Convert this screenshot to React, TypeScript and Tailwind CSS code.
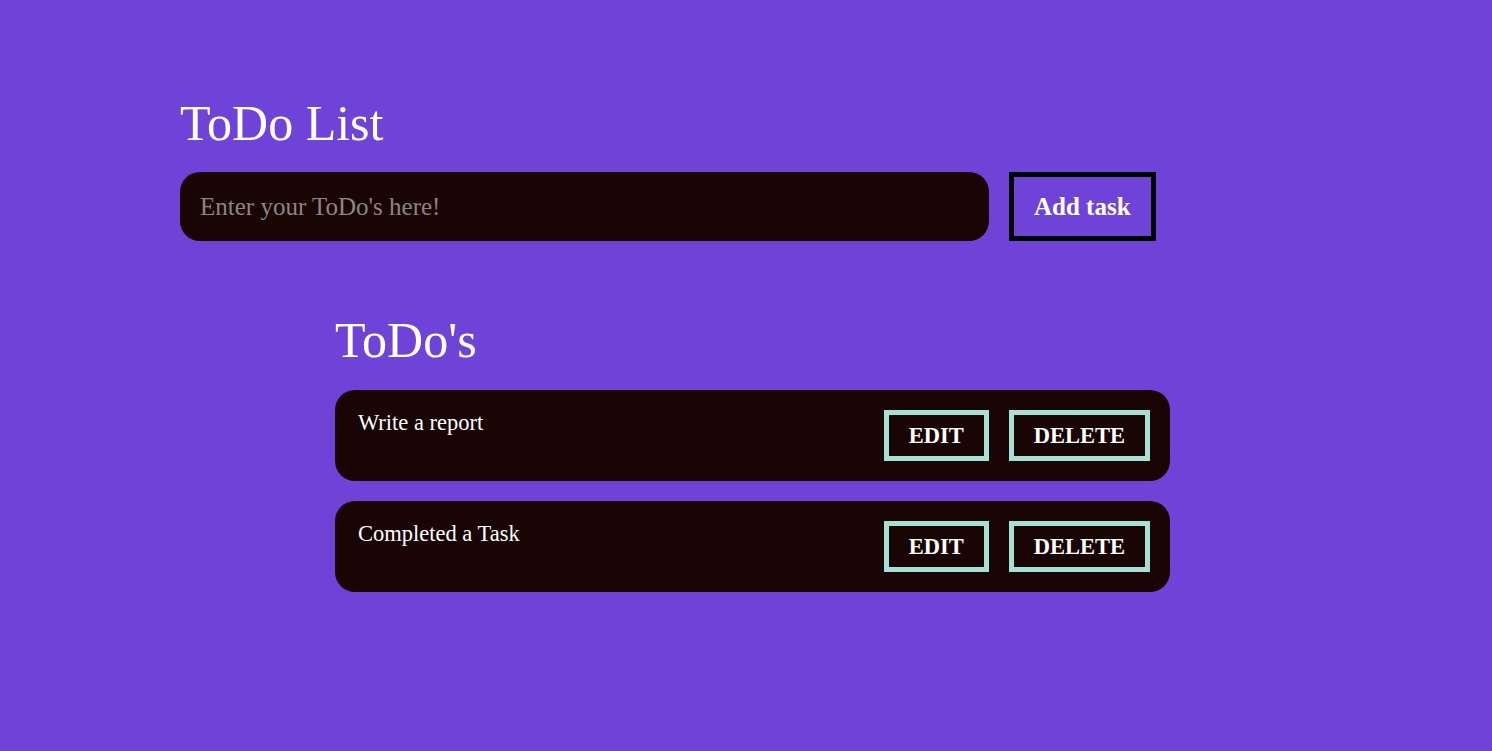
const todos = ["Write a report", "Completed a Task"];

const serif = { fontFamily: '"Liberation Serif", "Times New Roman", serif' };

export default function App() {
  return (
    <div className="min-h-screen w-full bg-[#7043d8] text-white" style={serif}>
      <div className="pl-[180px] pt-[97px]">
        <h1 className="text-[50px] leading-[53px] font-normal">ToDo List</h1>
        <div className="mt-[22px] flex gap-5">
          <input
            type="text"
            placeholder="Enter your ToDo's here!"
            className="h-[69px] w-[809px] rounded-[20px] bg-[#1a0505] px-5 text-[25px] text-white outline-none placeholder:text-[#8c8484]"
            style={serif}
          />
          <button
            className="h-[69px] border-[5px] border-black px-5 text-[25px] font-bold text-white"
            style={serif}
          >
            Add task
          </button>
        </div>

        <div className="ml-[155px] mt-[73px] w-[835px]">
          <h2 className="text-[50px] leading-[53px] font-normal">ToDo's</h2>
          <div className="mt-[23px] flex flex-col gap-5">
            {todos.map((t) => (
              <div
                key={t}
                className="flex items-start justify-between rounded-[20px] bg-[#1a0505] py-5 pl-[23px] pr-5"
              >
                <p className="text-[22.5px] leading-[26px]">{t}</p>
                <div className="flex gap-5">
                  <button
                    className="h-[51px] border-[5px] border-[#a6e0d5] px-5 text-[22.5px] font-bold text-white"
                    style={serif}
                  >
                    EDIT
                  </button>
                  <button
                    className="h-[51px] border-[5px] border-[#a6e0d5] px-5 text-[22.5px] font-bold text-white"
                    style={serif}
                  >
                    DELETE
                  </button>
                </div>
              </div>
            ))}
          </div>
        </div>
      </div>
    </div>
  );
}
